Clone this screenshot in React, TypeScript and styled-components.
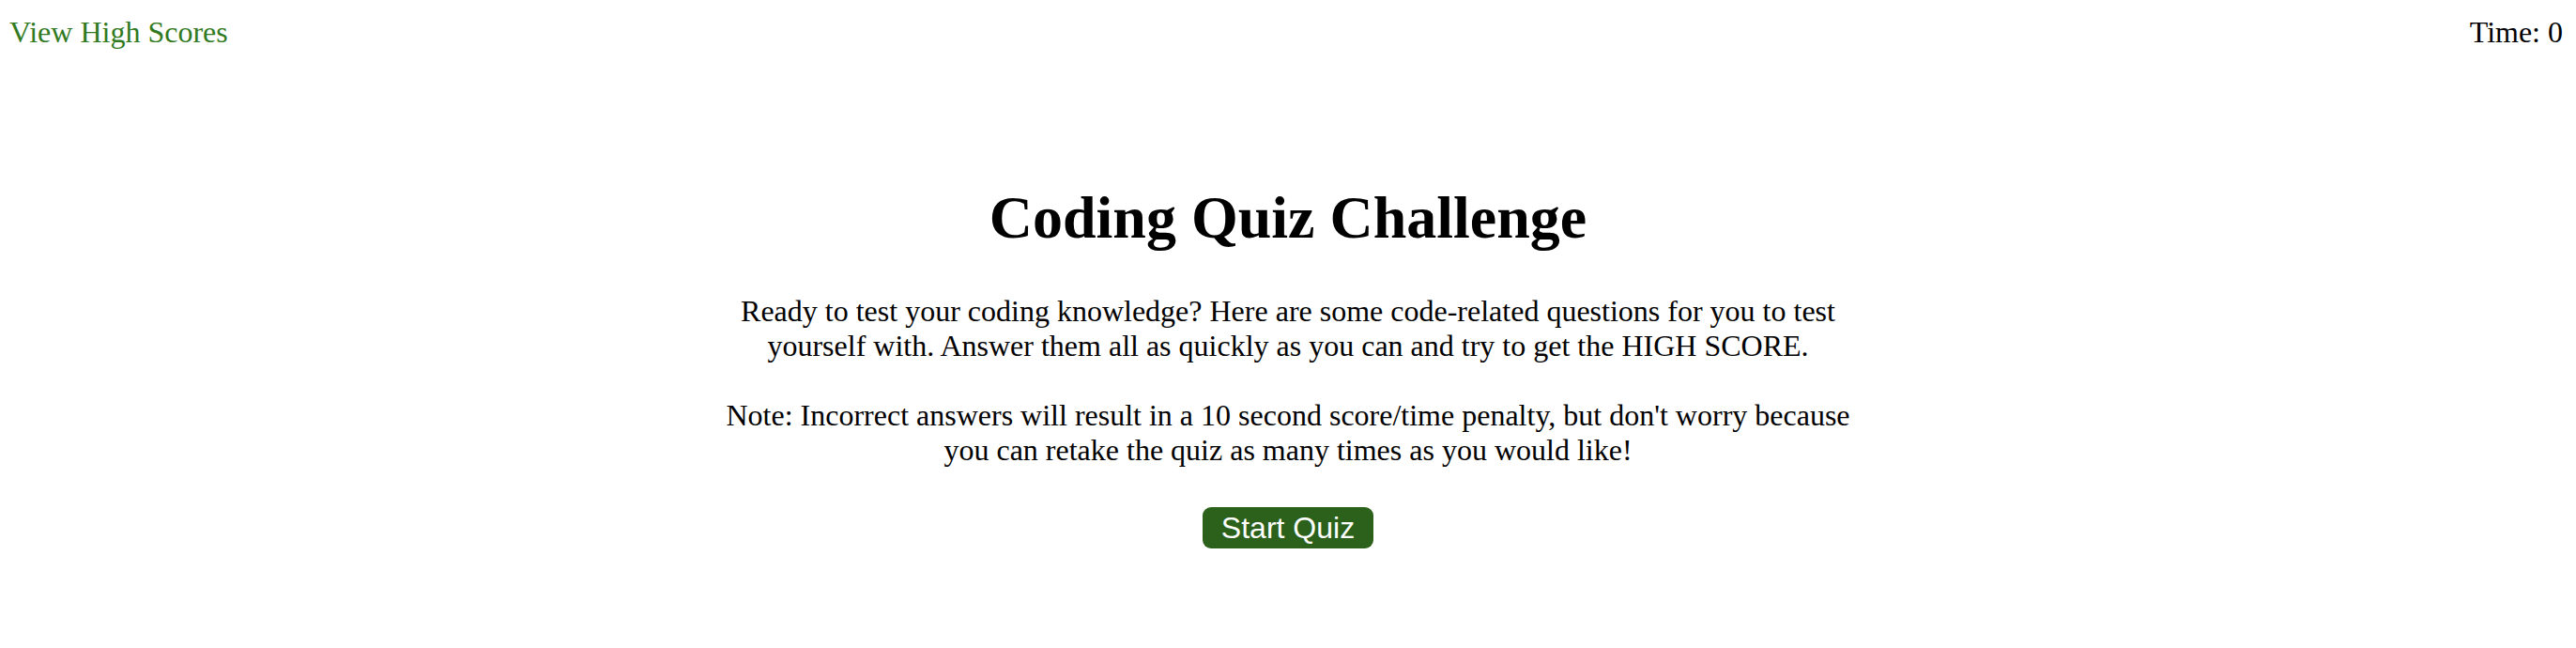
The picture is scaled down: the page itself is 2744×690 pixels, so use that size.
import React from "react";
import styled, { createGlobalStyle } from "styled-components";

const GlobalStyle = createGlobalStyle`
  html, body {
    margin: 0;
    padding: 0;
    background: #ffffff;
  }
  body {
    font-family: "Liberation Serif", "Times New Roman", serif;
    color: #000000;
  }
`;

const Page = styled.div`
  display: flex;
  flex-direction: column;
  min-height: 690px;
`;

const Header = styled.header`
  display: flex;
  justify-content: space-between;
  align-items: flex-start;
  padding: 16px 14px 0 10px;
  font-size: 32px;
  line-height: 37px;
`;

const ScoresLink = styled.a`
  color: #317a22;
  text-decoration: none;
  cursor: pointer;
`;

const Timer = styled.div`
  color: #000000;
`;

const Main = styled.main`
  display: flex;
  flex-direction: column;
  align-items: center;
  padding-top: 142px;
`;

const Title = styled.h1`
  margin: 0;
  font-size: 64px;
  line-height: 74px;
  font-weight: bold;
  text-align: center;
`;

const Intro = styled.p`
  margin: 44px 0 0;
  width: 1200px;
  font-size: 32px;
  line-height: 37px;
  text-align: center;
`;

const StartButton = styled.button`
  margin-top: 42px;
  padding: 4px 20px;
  border: none;
  border-radius: 9px;
  background: #2b611b;
  color: #ffffff;
  font-family: "Liberation Sans", Arial, sans-serif;
  font-size: 32px;
  line-height: 36px;
  cursor: pointer;
`;

export default function App() {
  return (
    <Page>
      <GlobalStyle />
      <Header>
        <ScoresLink>View High Scores</ScoresLink>
        <Timer>Time: 0</Timer>
      </Header>
      <Main>
        <Title>Coding Quiz Challenge</Title>
        <Intro>
          Ready to test your coding knowledge? Here are some code-related questions for you to test
          yourself with. Answer them all as quickly as you can and try to get the HIGH SCORE.
          <br />
          <br />
          Note: Incorrect answers will result in a 10 second score/time penalty, but don't worry
          because you can retake the quiz as many times as you would like!
        </Intro>
        <StartButton>Start Quiz</StartButton>
      </Main>
    </Page>
  );
}
